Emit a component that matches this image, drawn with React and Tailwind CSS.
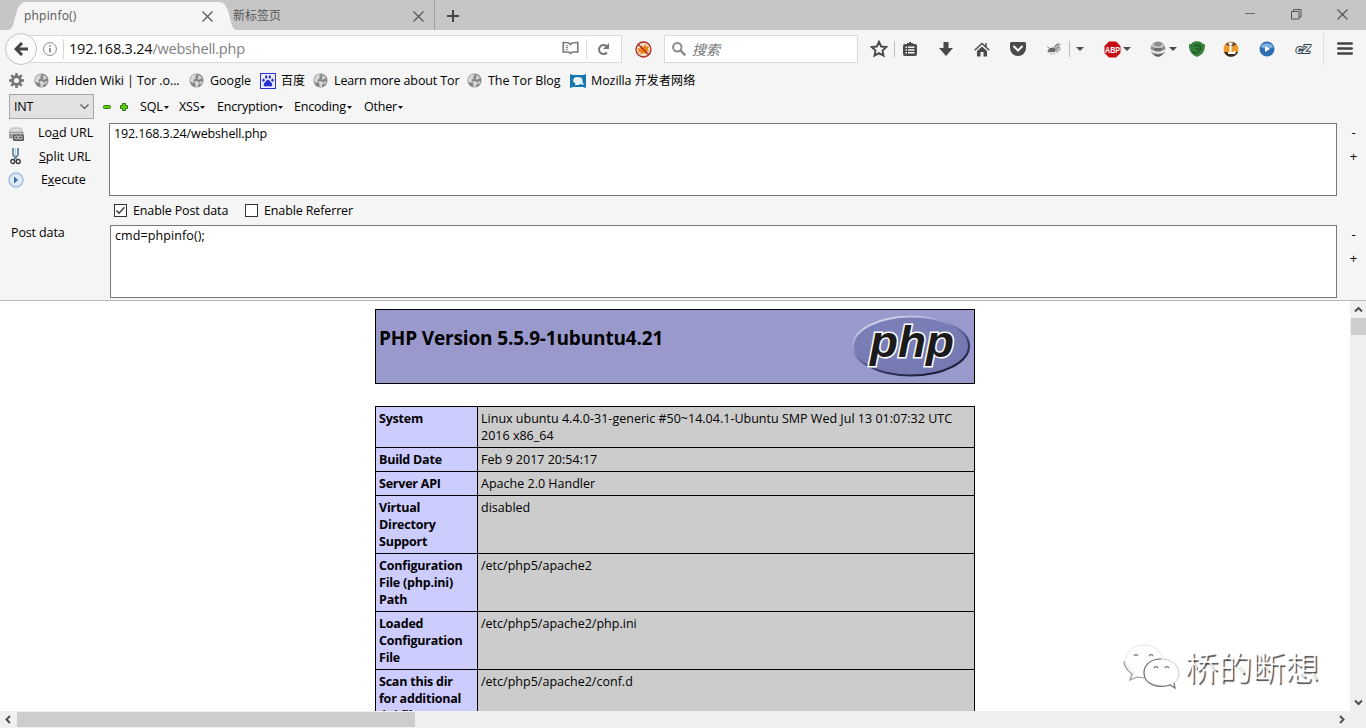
import React from "react";

const ui = "font-['Open_Sans','Noto_Sans_CJK_SC',sans-serif]";

function Caret({ className = "" }) {
  return (
    <svg className={className} width="8" height="4" viewBox="0 0 8 4"><path d="M0 0h8L4 4z" fill="#4c4c4c" /></svg>
  );
}

function Close({ className = "" }) {
  return (
    <svg className={className} width="11" height="11" viewBox="0 0 11 11" stroke="#555" strokeWidth="1.2"><path d="M.5.5l10 10M10.500.5l-10 10" /></svg>
  );
}

function Globe() {
  return (
    <svg className="shrink-0 -mt-px" width="15" height="15" viewBox="0 0 15 15">
      <circle cx="7.500" cy="7.500" r="7" fill="#858585" />
      <path d="M1.500 5l2-2.800 3-1 1.500.8-2 1.500L7 5 4.500 7 5 9 3 10 1 8zM9 2l3 1.500 1 2.500-2-.5-1 1.500L8.500 6l1-1.500zM6 8l3 .5 2 1.500-1.500 1.500-1 2.500H6.500L6.500 11 5.300 9.500zM11.500 8l2 .5-1.500 3-1-.5z" fill="#d8d8d8" />
    </svg>
  );
}

function TabBar() {
  return (
    <div className="flex h-[30px] bg-[#c6c6c6] pl-[8px] text-[12px] text-[#555]">
      <svg className="shrink-0" width="18" height="30" viewBox="0 0 18 30"><path d="M0 30C9 30 5 2 18 2V30Z" fill="#f5f5f5" /></svg>
      <div className="mt-[2px] flex h-[28px] w-[193px] shrink-0 items-center bg-[#f5f5f5]">
        <span className="-ml-[2px] w-[178px] tracking-[0.200px]">phpinfo()</span>
        <Close />
      </div>
      <svg className="shrink-0" width="18" height="30" viewBox="0 0 18 30"><path d="M0 2C13 2 9 30 18 30H0Z" fill="#f5f5f5" /></svg>
      <div className="flex w-[198px] shrink-0 items-center border-r border-[#a0a0a0] pl-0">
        <span className="-ml-[4px] w-[180px] pt-[2px]">新标签页</span>
        <Close className="mt-[2px]" />
      </div>
      <svg className="ml-[12px] mt-[10px] shrink-0" width="12" height="12" viewBox="0 0 12 12" stroke="#444" strokeWidth="2"><path d="M6 0v12M0 6h12" /></svg>
      <div className="ml-auto flex h-[28px] items-center pr-[18px]">
        <svg width="10" height="10" viewBox="0 0 10 10" stroke="#666"><path d="M0 4.500h10" /></svg>
        <svg className="ml-[36px]" width="11" height="11" viewBox="0 0 11 11" fill="none" stroke="#555"><path d="M.5 2.500h7.500v7.500H.5zM2.500 2.500V.5h7.500V8H8" /></svg>
        <Close className="ml-[35px]" />
      </div>
    </div>
  );
}

function Sep() {
  return <div className="h-[16px] w-px bg-[#bdbdbd]" />;
}

function Slot({ className, children }) {
  return <div className={"flex shrink-0 items-center justify-center " + className}>{children}</div>;
}

function Toolbar() {
  return (
    <div className="flex h-[38px] items-center pl-[5px]">
      <div className="z-10 flex h-[32px] w-[32px] shrink-0 items-center justify-center rounded-full border border-[#c4c4c4] bg-[#fafafa]">
        <svg width="14" height="14" viewBox="0 0 14 14" fill="none" stroke="#444" strokeWidth="3"><path d="M14 7H3M8 1L2 7l6 6" /></svg>
      </div>
      <div className="-ml-[16px] flex h-[28px] w-[601px] shrink-0 items-center border border-[#dadada] bg-white pl-[21px]">
        <svg width="14" height="14" viewBox="0 0 14 14" fill="none"><circle cx="7" cy="7" r="6.400" stroke="#888" /><path d="M7 6v4.500M7 3.300v1.500" stroke="#777" strokeWidth="1.500" /></svg>
        <div className="ml-[6px] h-[20px] w-px bg-[#d8d8d8]" />
        <span className="ml-[5px] w-[493px] text-[14.500px] tracking-[-0.220px] text-[#808080]"><span className="text-[#111]">192.168.3.24</span>/webshell.php</span>
        <svg className="-mt-[2px]" width="17" height="14" viewBox="0 0 18 14" fill="none" stroke="#777" strokeWidth="1.700"><path d="M9 3C7 1 4 1.200 1.300 1.200v10H7l2 1.500 2-1.500h5.700v-10C14 1.200 11 1 9 3z" /><path d="M9 3v1.500M4 4.500h2.500M4 6.500h2.500M4 8.500h2.500" strokeWidth="1" /></svg>
        <div className="ml-[7px] h-[20px] w-px bg-[#e0e0e0]" />
        <svg className="ml-[10px]" width="13" height="13" viewBox="0 0 13 13"><path d="M10 9.500A4.500 4.500 0 1 1 9.500 3.200" fill="none" stroke="#777" strokeWidth="2" /><path d="M12 0v6H6z" fill="#777" /></svg>
      </div>
      <svg className="ml-[13px] shrink-0" width="17" height="17" viewBox="0 0 17 17"><circle cx="8.500" cy="8.500" r="7.500" fill="#f4ddc9" stroke="#b02b20" strokeWidth="1.300" /><path d="M2.500 7l3 .5L6 4.500l2 1.800L10.500 3l.5 3 3.500-1-2 3 2 2.500-3-.2-.5 3-2.500-1.600L6 13.500l-.5-2.800-3 .8L4 9z" fill="#ee7d12" /><path d="M3.200 3.200l10.600 10.600" stroke="#a92a20" strokeWidth="1.300" /></svg>
      <div className="ml-[12px] flex h-[28px] w-[194px] shrink-0 items-center border border-[#dadada] bg-white pl-[7px]">
        <svg width="14" height="14" viewBox="0 0 14 14" fill="none" stroke="#8a8a8a"><circle cx="5.300" cy="5.300" r="4.200" strokeWidth="2" /><path d="M8.500 8.500l4.800 4.800" strokeWidth="2.400" /></svg>
        <span className="ml-[6px] pt-px text-[14px] italic text-[#777]">搜索</span>
      </div>
      <div className="ml-[12px] flex items-center">
        <Slot className="w-[18px]"><svg width="18" height="18" viewBox="0 0 18 18" fill="none" stroke="#4a4a4a" strokeWidth="1.900"><path d="M9 1.800l2.200 4.700 5 .6-3.700 3.500 1 5L9 13.100l-4.500 2.500 1-5L1.800 7.100l5-.6z" /></svg></Slot>
        <Slot className="w-[12px]"><Sep /></Slot>
        <Slot className="w-[20px]"><svg className="-mt-px" width="14" height="14" viewBox="0 0 14 14"><path d="M2 2h2V1h2V0h2v1h2v1h2q2 0 2 2v8q0 2-2 2H2q-2 0-2-2V4q0-2 2-2z" fill="#4a4a4a" /><path d="M2.500 4.500h1.500V6H2.500zM5 4.500h6.500V6H5zM2.500 7.200h1.500v1.500H2.500zM5 7.200h6.500v1.500H5zM2.500 10h1.500v1.500H2.500zM5 10h6.500v1.500H5z" fill="#f5f5f5" /></svg></Slot>
        <Slot className="ml-[16px] w-[20px]"><svg width="14" height="14" viewBox="0 0 14 14" fill="#4a4a4a"><path d="M4.500 0h5v6H14l-7 8-7-8h4.500z" /></svg></Slot>
        <Slot className="ml-[16px] w-[20px]"><svg width="16" height="15" viewBox="0 0 16 15" fill="#4a4a4a"><path d="M8 4.500l5 4.500v5.500H9.500V10h-3v4.500H3V9z" /><path d="M.7 8.300L8 1.500l7.300 6.800M12 1v4" fill="none" stroke="#4a4a4a" strokeWidth="1.500" /></svg></Slot>
        <Slot className="ml-[16px] w-[20px]"><svg className="-mt-px" width="16" height="14" viewBox="0 0 16 14"><path d="M1.500 0h13Q16 0 16 1.500V6a8 8 0 0 1-16 0V1.500Q0 0 1.500 0z" fill="#4a4a4a" /><path d="M4 4.500l4 4 4-4" fill="none" stroke="#f5f5f5" strokeWidth="2" strokeLinecap="round" /></svg></Slot>
        <Slot className="ml-[16px] w-[20px]"><svg className="-mt-px" width="16" height="14" viewBox="0 0 16 14"><path d="M6 6L11 1.500l4 .5-3 4zM7 8l7-2 1 2-5 2z" fill="#b4b4b4" /><path d="M9 4l4-2.500M9 7l5-2" stroke="#666" strokeWidth=".8" /><ellipse cx="6" cy="8" rx="3.500" ry="2.200" fill="#666" /><circle cx="3" cy="9" r="1.500" fill="#777" /><path d="M1 4.500l3 2M4 12h2M8 9v3.500M10 8l2 3" stroke="#888" strokeWidth=".8" /></svg></Slot>
        <Slot className="w-[10px]"><Sep /></Slot>
        <Slot className="ml-px w-[10px]"><Caret /></Slot>
        <Slot className="ml-[17px] w-[20px]">
          <svg width="17" height="17" viewBox="0 0 17 17"><path d="M5 .5h7l4.500 4.500v7L12 16.500H5L.5 12V5z" fill="#c70d11" /><text x="8.500" y="11.500" textAnchor="middle" textLength="15" lengthAdjust="spacingAndGlyphs" fontFamily="Liberation Sans" fontWeight="700" fontSize="8.500" fill="#fff">ABP</text></svg>
        </Slot>
        <Slot className="w-[10px]"><Caret /></Slot>
        <Slot className="ml-[16px] w-[20px]"><svg width="16" height="16" viewBox="0 0 16 16"><circle cx="8" cy="8" r="7.500" fill="#8d8d8d" /><path d="M1.500 5q1-2 3-3l-.5 2q4 3 8 0l-.5-2q2 1 3 3-3 3-6.500 3T1.500 5z" fill="#c8c8c8" /><path d="M0 8l4 2q4 2 8 0l4-2v2q-8 5.500-16 0z" fill="#f3f3f3" /><path d="M4.500 6.500q3.500 2 7 0l-.5 2.500H5z" fill="#5a5a5a" /><path d="M3.500 13q4.500 1.500 9 0L10 15.500H6z" fill="#5a5a5a" /></svg></Slot>
        <Slot className="w-[10px]"><Caret /></Slot>
        <Slot className="ml-[9px] w-[20px]"><svg width="16" height="16" viewBox="0 0 16 16"><path d="M0 3.500q2 0 3.500-2Q8-.8 12.500 1.500q1.500 2 3.500 2Q16.500 13 8 16-.5 13 0 3.500z" fill="#35803a" /><path d="M5 5.500q4-3 6 0t-2 5.500-5-1M6.500 8h4" fill="none" stroke="#1b5a20" strokeWidth="1.400" /></svg></Slot>
        <Slot className="ml-[14px] w-[20px]"><svg width="16" height="16" viewBox="0 0 16 16"><circle cx="8" cy="8" r="7.500" fill="#ee9a2a" /><path d="M1 11h14A7.500 7.500 0 0 1 1 11z" fill="#3b2a1c" /><path d="M2.500 3.500A7.500 7.500 0 0 1 13.500 3.500L10 5H6z" fill="#5d4a38" /><path d="M5.500 2.500h4M7.500 2.500v9.500M5 12h6.500v-2" fill="none" stroke="#fff" strokeWidth="1.900" /></svg></Slot>
        <Slot className="ml-[16px] w-[20px]"><svg width="16" height="16" viewBox="0 0 16 16"><circle cx="8" cy="8" r="7.500" fill="#2f6db5" /><path d="M1.500 6a7 6 0 0 1 13 0q-6 3-13 0z" fill="#7fb0e3" /><path d="M6 5l5 3-5 3z" fill="#fff" /></svg></Slot>
        <Slot className="ml-[16px] w-[20px]"><svg width="18" height="14" viewBox="0 0 18 14"><text x="9" y="11" textAnchor="middle" textLength="14" lengthAdjust="spacingAndGlyphs" fontFamily="Liberation Sans" fontStyle="italic" fontWeight="700" fontSize="11" fill="#f0f4f6" stroke="#34434f" strokeWidth="1.900" paintOrder="stroke">cZ</text></svg></Slot>
        <Slot className="ml-[5px] w-[10px]"><div className="h-[32px] w-px bg-[#dcdcdc]" /></Slot>
        <Slot className="ml-[7px] w-[20px]"><svg className="-mt-px" width="16" height="13" viewBox="0 0 16 13" stroke="#444" strokeWidth="2.600" strokeLinecap="round"><path d="M1.300 1.500h13.400M1.300 6.500h13.400M1.300 11.500h13.400" /></svg></Slot>
      </div>
    </div>
  );
}

function Bookmarks() {
  return (
    <div className="flex h-[25px] items-center whitespace-nowrap pl-[9px] pt-px text-[12.500px] text-black">
      <svg className="shrink-0 -mt-px" width="15" height="15" viewBox="0 0 15 15" fill="none" stroke="#757575"><circle cx="7.500" cy="7.500" r="4" strokeWidth="2.800" /><path d="M7.500 0v3M7.500 12v3M0 7.500h3M12 7.500h3M2.200 2.200l2 2M10.800 10.800l2 2M12.800 2.200l-2 2M4.200 10.800l-2 2" strokeWidth="2.400" /></svg>
      <div className="ml-[10px] flex w-[155px] items-center gap-[6px]"><Globe /><span className="tracking-[-0.100px]">Hidden Wiki | Tor .o...</span></div>
      <div className="flex w-[71px] items-center gap-[6px]"><Globe /><span>Google</span></div>
      <div className="flex w-[53px] items-center gap-[5px]">
        <svg className="shrink-0 -mt-px" width="16" height="16" viewBox="0 0 16 16"><rect x=".5" y=".5" width="15" height="15" fill="#eef" stroke="#2932d5" /><g fill="#2932d5"><ellipse cx="6.200" cy="4" rx="1.200" ry="1.800" /><ellipse cx="9.800" cy="4" rx="1.200" ry="1.800" /><ellipse cx="3.500" cy="7.200" rx="1.200" ry="1.600" /><ellipse cx="12.500" cy="7.200" rx="1.200" ry="1.600" /><path d="M8 6.800c1.500 0 2 1.800 3.300 2.900 2 1.700.7 4.100-1.300 3.700-1.300-.3-2.700-.3-4 0-2 .4-3.300-2-1.300-3.700C6 8.600 6.500 6.800 8 6.800z" /></g></svg>
        <span className="text-[12px]">百度</span>
      </div>
      <div className="flex w-[154px] items-center gap-[6px]"><Globe /><span className="tracking-[-0.130px]">Learn more about Tor</span></div>
      <div className="flex w-[103px] items-center gap-[6px]"><Globe /><span className="tracking-[-0.050px]">The Tor Blog</span></div>
      <div className="flex items-center gap-[5px]">
        <svg className="shrink-0 -mt-px" width="16" height="14" viewBox="0 0 16 14"><path d="M0 0l3 1h10l3-1v14l-3-1H3l-3 1z" fill="#1577ad" /><path d="M3 7q0-3 3-4l5 .5Q13 5 12.500 8L14 11l-4-1-1 1H6l-1 1 .5-2z" fill="#e9f4fa" /></svg>
        <span className="tracking-[-0.080px]">Mozilla <span className="text-[12px] tracking-[0.150px]">开发者网络</span></span>
      </div>
    </div>
  );
}

function MenuItem({ className, children }) {
  return (
    <div className={"flex shrink-0 items-center gap-px pt-[2px] " + className}>
      <span>{children}</span>
      <svg className="-mt-px shrink-0" width="5" height="3" viewBox="0 0 5 3"><path d="M0 0h5L2.500 3z" fill="#111" /></svg>
    </div>
  );
}

function HackMenu() {
  return (
    <div className="flex h-[27px] items-center whitespace-nowrap pl-[9px] text-[12.500px] tracking-[-0.200px] text-black">
      <div className="flex h-[25px] w-[85px] shrink-0 items-center justify-between border border-[#a6a6a6] bg-[#e2e2e2] pl-[4px] pr-[4px]">
        <span className="pt-px">INT</span>
        <svg width="9" height="6" viewBox="0 0 9 6" fill="none" stroke="#555" strokeWidth="1.200"><path d="M.5.5l4 4 4-4" /></svg>
      </div>
      <svg className="ml-[9px] shrink-0" width="8" height="4" viewBox="0 0 8 4"><rect x=".5" y=".5" width="7" height="3" rx="1" fill="#63cc12" stroke="#2e7d0c" /></svg>
      <svg className="ml-[9px] shrink-0" width="8" height="8" viewBox="0 0 8 8"><path d="M2.500.5h3v2h2v3h-2v2h-3v-2h-2v-3h2z" fill="#63cc12" stroke="#2e7d0c" /></svg>
      <MenuItem className="ml-[12px] w-[39px]">SQL</MenuItem>
      <MenuItem className="w-[38px]">XSS</MenuItem>
      <MenuItem className="w-[77px]">Encryption</MenuItem>
      <MenuItem className="w-[70px]">Encoding</MenuItem>
      <MenuItem className="w-[50px]">Other</MenuItem>
    </div>
  );
}

function PlusMinus() {
  return (
    <div className="-mt-[3px] flex flex-1 flex-col items-center pl-[4px] text-[13px] leading-[24px] text-black"><span>-</span><span>+</span></div>
  );
}

function CheckBox({ on, children, className }) {
  return (
    <div className={"flex items-center gap-[6px] " + className}>
      <svg width="13" height="13" viewBox="0 0 13 13" fill="none" stroke="#333"><rect x=".5" y=".5" width="12" height="12" fill="#fff" />{on && <path d="M2.500 6.500L5 9.300l5.500-6" strokeWidth="1.300" />}</svg>
      <span className="pt-[2px]">{children}</span>
    </div>
  );
}

function HackBar() {
  return (
    <div className="whitespace-nowrap pt-[3px] text-[12.500px] tracking-[-0.130px] text-black">
      <div className="flex">
        <div className="-mt-[2px] flex w-[109px] shrink-0 flex-col pl-[8px] leading-[24px]">
          <div className="flex h-[24px] items-center">
            <svg className="mt-[2px]" width="17" height="16" viewBox="0 0 17 16"><path d="M3.500 2h9L15 6H1z" fill="#dedede" stroke="#b5b5b5" /><path d="M1 6h14.500v6.500H1z" fill="#9b9b9b" /><path d="M2 7.500h12" stroke="#cfcfcf" /><rect x="5" y="8.500" width="11" height="6.500" rx="1.500" fill="#555" /><rect x="6.500" y="10" width="4" height="3" rx="1.500" fill="none" stroke="#ddd" /><rect x="10.500" y="10" width="4" height="3" rx="1.500" fill="none" stroke="#ddd" /></svg>
            <span className="ml-[13px] tracking-[0px]">Lo<u>a</u>d URL</span>
          </div>
          <div className="flex h-[24px] items-center">
            <svg className="-mt-[2px] ml-[2px]" width="11" height="18" viewBox="0 0 11 18" fill="none"><path d="M3 1v7l3.500 4M8 1v7l-3.500 4" stroke="#557a92" strokeWidth="1.600" /><path d="M5.500 1v8" stroke="#b9cbd6" /><circle cx="2.800" cy="14.500" r="2" stroke="#333" strokeWidth="1.300" /><circle cx="8.200" cy="14.500" r="2" stroke="#333" strokeWidth="1.300" /></svg>
            <span className="ml-[18px] tracking-[0px]"><u>S</u>plit URL</span>
          </div>
          <div className="-mt-px flex h-[23px] items-center">
            <svg width="16" height="16" viewBox="0 0 16 16"><circle cx="8" cy="8" r="7" fill="#e1ebf6" stroke="#a5bddb" strokeWidth="1.500" /><path d="M6 4.500L10 8 6 11.500z" fill="#3b6dac" /></svg>
            <span className="ml-[17px]">E<u>x</u>ecute</span>
          </div>
        </div>
        <div className="h-[73px] w-[1228px] shrink-0 border border-[#777] bg-white px-[4px] pt-px">192.168.3.24/webshell.php</div>
        <PlusMinus />
      </div>
      <div className="flex h-[29px] items-center pl-[114px]">
        <CheckBox on className="w-[131px]">Enable Post data</CheckBox>
        <CheckBox>Enable Referrer</CheckBox>
      </div>
      <div className="flex">
        <div className="-mt-px w-[110px] shrink-0 pl-[11px]">Post data</div>
        <div className="h-[73px] w-[1227px] shrink-0 border border-[#777] bg-white px-[4px] pt-px tracking-[0.100px]">cmd=phpinfo();</div>
        <PlusMinus />
      </div>
    </div>
  );
}

const rows = [
  [["System"], ["Linux ubuntu 4.4.0-31-generic #50~14.04.1-Ubuntu SMP Wed Jul 13 01:07:32 UTC", "2016 x86_64"]],
  [["Build Date"], ["Feb 9 2017 20:54:17"]],
  [["Server API"], ["Apache 2.0 Handler"]],
  [["Virtual", "Directory", "Support"], ["disabled"]],
  [["Configuration", "File (php.ini)", "Path"], ["/etc/php5/apache2"]],
  [["Loaded", "Configuration", "File"], ["/etc/php5/apache2/php.ini"]],
  [["Scan this dir", "for additional", ".ini files"], ["/etc/php5/apache2/conf.d"]],
];

function PhpLogo() {
  return (
    <svg className="shrink-0" width="120" height="64" viewBox="0 0 120 64">
      <defs>
        <linearGradient id="rim" x1="0.200" y1="0" x2="0.800" y2="1"><stop offset="0" stopColor="#dfe0f2" /><stop offset=".35" stopColor="#8d91c4" /><stop offset=".65" stopColor="#3b3f70" /><stop offset="1" stopColor="#15152c" /></linearGradient>
        <radialGradient id="body" cx=".4" cy=".35" r=".7"><stop offset="0" stopColor="#7d82bb" /><stop offset="1" stopColor="#7478b0" /></radialGradient>
      </defs>
      <ellipse cx="60" cy="32" rx="58" ry="29.500" fill="url(#body)" stroke="url(#rim)" strokeWidth="2.200" />
      <text x="61" y="43" textAnchor="middle" textLength="84" lengthAdjust="spacingAndGlyphs" fontFamily="Liberation Sans" fontStyle="italic" fontWeight="700" fontSize="44" fill="#1c1b1b" stroke="#fff" strokeWidth="3" strokeLinejoin="miter" paintOrder="stroke">php</text>
    </svg>
  );
}

function PhpInfo() {
  return (
    <div className="ml-[375px] w-[600px] pt-[8px] text-black">
      <div className="flex h-[75px] justify-between border border-black bg-[#9999cc] pl-[3px]">
        <h1 className="pt-[14px] text-[19px] font-bold leading-[28px] tracking-[-0.150px]">PHP Version 5.5.9-1ubuntu4.21</h1>
        <div className="flex pr-[3px] pt-[4px]"><PhpLogo /></div>
      </div>
      <div className="mt-[22px] border border-b-0 border-black text-[12.500px] leading-[17px]">
        {rows.map(([k, v]) => (
          <div key={k[0]} className="flex border-b border-black bg-[#cccccc]">
            <div className="w-[102px] shrink-0 whitespace-nowrap border-r border-black bg-[#ccccff] py-[3px] pl-[3px] font-bold tracking-[-0.220px]">
              {k.map((t) => <div key={t}>{t}</div>)}
            </div>
            <div className="whitespace-nowrap py-[3px] pl-[3px] tracking-[0.010px]">
              {v.map((t) => <div key={t}>{t}</div>)}
            </div>
          </div>
        ))}
      </div>
    </div>
  );
}

function Watermark() {
  return (
    <div className="absolute left-[1122px] top-[639px] flex items-center">
      <svg className="mt-[3px]" width="60" height="50" viewBox="0 0 60 50" fill="none">
        <path d="M9 38l3-7C-3 20 4 4 22 3c10 0 17 6 19 14" stroke="#e6e6e6" />
        <path d="M2 19c0 6 4 10 8 13l-2 6 7-3 7 1" stroke="#999" strokeWidth="1.200" />
        <path d="M39 17c-12 0-17 7-17 14 0 11 14 16 26 12l5 3-1-5c10-8 4-24-13-24z" fill="#fff" stroke="#c9c9c9" />
        <path d="M39 17c-12 0-17 7-17 14 0 11 14 16 26 12l5 3-1-5" stroke="#777" strokeWidth="1.200" />
        <path d="M12 14q2-3 4 0M27 14q2-3 4 0M32 26q2-3 4 0M43 26q2-3 4 0" stroke="#888" strokeWidth="1.500" />
      </svg>
      <span className="ml-[3px] font-['Noto_Sans_CJK_SC',sans-serif] text-[33.500px] font-light leading-[50px] text-white [text-shadow:1.5px_1.5px_1px_#444]">桥的断想</span>
    </div>
  );
}

function Chevron({ d }) {
  return <svg width="9" height="9" viewBox="0 0 9 9" fill="none" stroke="#505050" strokeWidth="2"><path d={d} /></svg>;
}

export default function App() {
  return (
    <div className={"relative flex h-[728px] w-[1366px] flex-col overflow-hidden bg-white " + ui}>
      <TabBar />
      <div className="h-[271px] shrink-0 border-b border-[#b9b9b9] bg-[#f5f5f5]">
        <Toolbar />
        <Bookmarks />
        <HackMenu />
        <HackBar />
      </div>
      <div className="flex h-[410px] shrink-0">
        <div className="h-[410px] w-[1350px] overflow-hidden"><PhpInfo /></div>
        <div className="flex w-[16px] flex-col items-center bg-[#f0f0f0]">
          <div className="flex h-[17px] items-center"><Chevron d="M1 6.500l3.500-3.500L8 6.500" /></div>
          <div className="h-[17px] w-[15px] bg-[#cdcdcd]" />
          <div className="mt-auto flex h-[17px] items-center"><Chevron d="M1 2.500L4.500 6 8 2.500" /></div>
        </div>
      </div>
      <div className="flex h-[17px] items-center bg-[#f0f0f0]">
        <div className="flex w-[17px] justify-center"><Chevron d="M6 1L2.500 4.500 6 8" /></div>
        <div className="h-[15px] w-[398px] bg-[#cdcdcd]" />
        <div className="ml-auto mr-[16px] flex w-[17px] justify-center"><Chevron d="M3 1l3.500 3.500L3 8" /></div>
      </div>
      <Watermark />
    </div>
  );
}
